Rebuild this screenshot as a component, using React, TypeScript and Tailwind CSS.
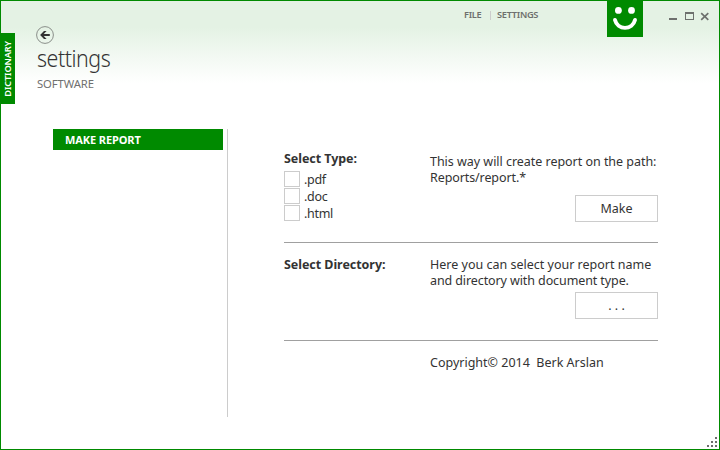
import React from "react";

const formats = [".pdf", ".doc", ".html"];

function Smile() {
  return (
    <svg width="36" height="36" viewBox="0 0 36 36" className="shrink-0 bg-[#008a00]">
      <circle cx="11.4" cy="9.4" r="3.4" fill="#fff" />
      <circle cx="24.5" cy="9.4" r="3.4" fill="#fff" />
      <path d="M8 19A10.3 10.3 0 0 0 28 19" fill="none" stroke="#fff" strokeWidth="3.9" strokeLinecap="round" />
    </svg>
  );
}

function BackButton() {
  return (
    <svg width="18" height="18" viewBox="0 0 18 18" className="block">
      <circle cx="9" cy="9" r="8.4" fill="none" stroke="#8a8f8a" strokeWidth="1" />
      <path d="M13.8 9H5.6" fill="none" stroke="#333" strokeWidth="2" />
      <path d="M4.1 9L8 5.1H10.6L6.8 9L10.6 12.9H8Z" fill="#333" />
    </svg>
  );
}

function WindowControls() {
  return (
    <svg width="44" height="12" viewBox="0 0 44 12" className="ml-[25px] mt-[9px] shrink-0" fill="#6d706d">
      <rect x="1" y="8" width="8" height="2" />
      <path fillRule="evenodd" d="M17 2h9v8h-9zM18 4v5h7V4z" />
      <path d="M33.2 3.2L40.3 9.8M40.3 3.2L33.2 9.8" stroke="#6d706d" strokeWidth="1.7" />
    </svg>
  );
}

function Grip() {
  return (
    <svg width="12" height="12" viewBox="0 0 12 12" className="absolute bottom-0 right-0" fill="#6d6d6d">
      <path d="M8 0h2v2h-2zM4 4h2v2h-2zM8 4h2v2h-2zM0 8h2v2h-2zM4 8h2v2h-2zM8 8h2v2h-2z" />
    </svg>
  );
}

function Button({ children }: { children: React.ReactNode }) {
  return (
    <button className="ml-[145px] flex h-[27px] w-[83px] items-center justify-center border border-[#ccc] bg-white pt-px">
      {children}
    </button>
  );
}

export default function App() {
  return (
    <div className="relative flex h-[450px] w-[720px] overflow-hidden border border-[#008a00] bg-white font-['Noto_Sans','Open_Sans',sans-serif] text-[12.5px] leading-4 text-[#333]">
      <div className="flex w-full bg-[linear-gradient(to_bottom,#e4f2e4_0px,#e4f2e4_26px,#fff_82px)]">
        <aside className="w-[14px] shrink-0 pt-8">
          <div className="flex h-[71px] w-[14px] items-center justify-center bg-[#008a00]">
            <span className="rotate-180 whitespace-nowrap text-[9.25px] font-semibold leading-[14px] tracking-[-0.15px] text-white [writing-mode:vertical-rl]">
              DICTIONARY
            </span>
          </div>
        </aside>
        <div className="flex min-w-0 flex-1 flex-col">
          <header className="flex h-32 shrink-0">
            <div className="w-[449px] shrink-0 pl-[21px] pt-[25px]">
              <BackButton />
              <h1 className="ml-px mt-[-1px] origin-left scale-x-[0.93] whitespace-nowrap text-[23px] font-light leading-[30px] tracking-[-0.5px]">settings</h1>
              <p className="ml-px mt-[3px] origin-left scale-x-[0.98] whitespace-nowrap text-[11.5px] leading-4 tracking-[-0.1px] text-[#707070]">SOFTWARE</p>
            </div>
            <nav className="flex h-7 w-[143px] shrink-0 items-center whitespace-nowrap text-[9.25px] font-semibold tracking-[-0.3px] text-[#6d706d]">
              <span className="w-[26px]">FILE</span>
              <span className="mr-1.5 h-[9px] w-px bg-[#ccc]" />
              <span>SETTINGS</span>
            </nav>
            <Smile />
            <WindowControls />
          </header>
          <main className="flex">
            <div className="flex h-[288px] w-[213px] shrink-0 border-r border-[#ccc] pl-[38px]">
              <div className="flex h-[21px] w-[170px] items-center bg-[#008a00] pl-3 pt-px text-[11px] font-bold tracking-[-0.1px] text-white">
                MAKE REPORT
              </div>
            </div>
            <div className="ml-14 w-[374px] shrink-0 whitespace-nowrap">
              <section className="flex h-[114px] border-b border-[#a0a0a0]">
                <div className="w-[146px] shrink-0 pt-[22px]">
                  <h2 className="font-bold tracking-[-0.06px]">Select Type:</h2>
                  <div className="mt-1 flex flex-col gap-px">
                    {formats.map((format) => (
                      <label key={format} className="flex h-4 items-center gap-1">
                        <span className="size-4 border border-[#ccc] bg-white" />
                        <span className="pt-0.5 tracking-[-0.3px]">{format}</span>
                      </label>
                    ))}
                  </div>
                </div>
                <div className="pt-[25px]">
                  <p className="tracking-[-0.03px]">This way will create report on the path:</p>
                  <p className="mb-[9px] tracking-[-0.1px]">Reports/report.*</p>
                  <Button>Make</Button>
                </div>
              </section>
              <section className="flex h-[98px] border-b border-[#a0a0a0]">
                <h2 className="w-[146px] shrink-0 pt-[14px] font-bold tracking-[-0.05px]">Select Directory:</h2>
                <div className="pt-[14px]">
                  <p>Here you can select your report name</p>
                  <p className="mb-[3px] tracking-[-0.1px]">and directory with document type.</p>
                  <Button>. . .</Button>
                </div>
              </section>
              <footer className="whitespace-pre pl-[146px] pt-[14px]">{"Copyright© 2014  Berk Arslan"}</footer>
            </div>
          </main>
        </div>
      </div>
      <Grip />
    </div>
  );
}
